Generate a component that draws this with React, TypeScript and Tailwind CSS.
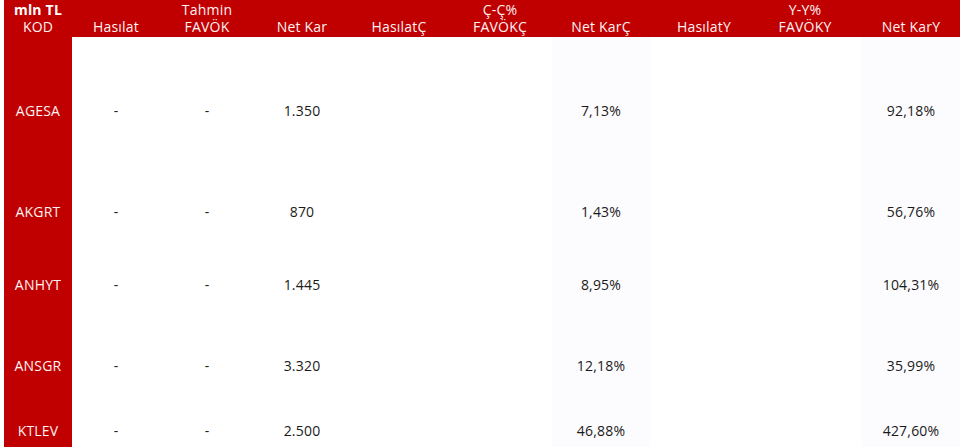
import React from "react";

type Row = { kod: string; h: string; netKar: string; netKarC: string; netKarY: string };

const rows: Row[] = [
  { kod: "AGESA", h: "h-[146px]", netKar: "1.350", netKarC: "7,13%", netKarY: "92,18%" },
  { kod: "AKGRT", h: "h-[56px]", netKar: "870", netKarC: "1,43%", netKarY: "56,76%" },
  { kod: "ANHYT", h: "h-[90px]", netKar: "1.445", netKarC: "8,95%", netKarY: "104,31%" },
  { kod: "ANSGR", h: "h-[72px]", netKar: "3.320", netKarC: "12,18%", netKarY: "35,99%" },
  { kod: "KTLEV", h: "h-[58px]", netKar: "2.500", netKarC: "46,88%", netKarY: "427,60%" },
];

const headers: { top?: string; bottom: string; extra?: string }[] = [
  { top: "mln TL", bottom: "KOD" },
  { bottom: "Hasılat" },
  { top: "Tahmin", bottom: "FAVÖK" },
  { bottom: "Net Kar" },
  { bottom: "HasılatÇ" },
  { top: "Ç-Ç%", bottom: "FAVÖKÇ" },
  { bottom: "Net KarÇ" },
  { bottom: "HasılatY" },
  { top: "Y-Y%", bottom: "FAVÖKY", extra: "pr-[10px]" },
  { bottom: "Net KarY" },
];

export default function App() {
  return (
    <div
      className="w-[960px] h-[447px] overflow-hidden bg-white pl-[4px]"
      style={{ fontFamily: '"Open Sans", "DejaVu Sans", sans-serif' }}
    >
      <div className="grid grid-cols-[68px_88px_94px_96px_98px_104px_98px_108px_104px_98px]">
        {headers.map((hd, i) => (
          <div
            key={i}
            className={`h-[37px] bg-[#c00000] flex flex-col items-center justify-end gap-[1px] pb-[2px] text-[14px] leading-[16px] tracking-[0.2px] text-[#fdf2f2] ${hd.extra ?? ""}`}
          >
            {hd.top ? (
              <span className={i === 0 ? "font-bold text-white" : ""}>{hd.top}</span>
            ) : null}
            <span>{hd.bottom}</span>
          </div>
        ))}
        {rows.map((r) => (
          <React.Fragment key={r.kod}>
            <div className={`${r.h} bg-[#c00000] flex items-center justify-center text-[14px] tracking-[0.2px] font-medium text-[#fdf2f2]`}>
              {r.kod}
            </div>
            <div className={`${r.h} flex items-center justify-center text-[14px] text-[#222]`}>-</div>
            <div className={`${r.h} flex items-center justify-center text-[14px] text-[#222]`}>-</div>
            <div className={`${r.h} flex items-center justify-center text-[14px] tracking-[0.2px] font-medium text-[#1a1a1a]`}>{r.netKar}</div>
            <div className={`${r.h}`}></div>
            <div className={`${r.h}`}></div>
            <div className={`${r.h} bg-[#fcfcfe] flex items-center justify-center text-[14px] tracking-[0.2px] font-medium text-[#1a1a1a]`}>{r.netKarC}</div>
            <div className={`${r.h}`}></div>
            <div className={`${r.h}`}></div>
            <div className={`${r.h} bg-[#fcfcfe] flex items-center justify-center text-[14px] tracking-[0.2px] font-medium text-[#1a1a1a]`}>{r.netKarY}</div>
          </React.Fragment>
        ))}
      </div>
    </div>
  );
}
